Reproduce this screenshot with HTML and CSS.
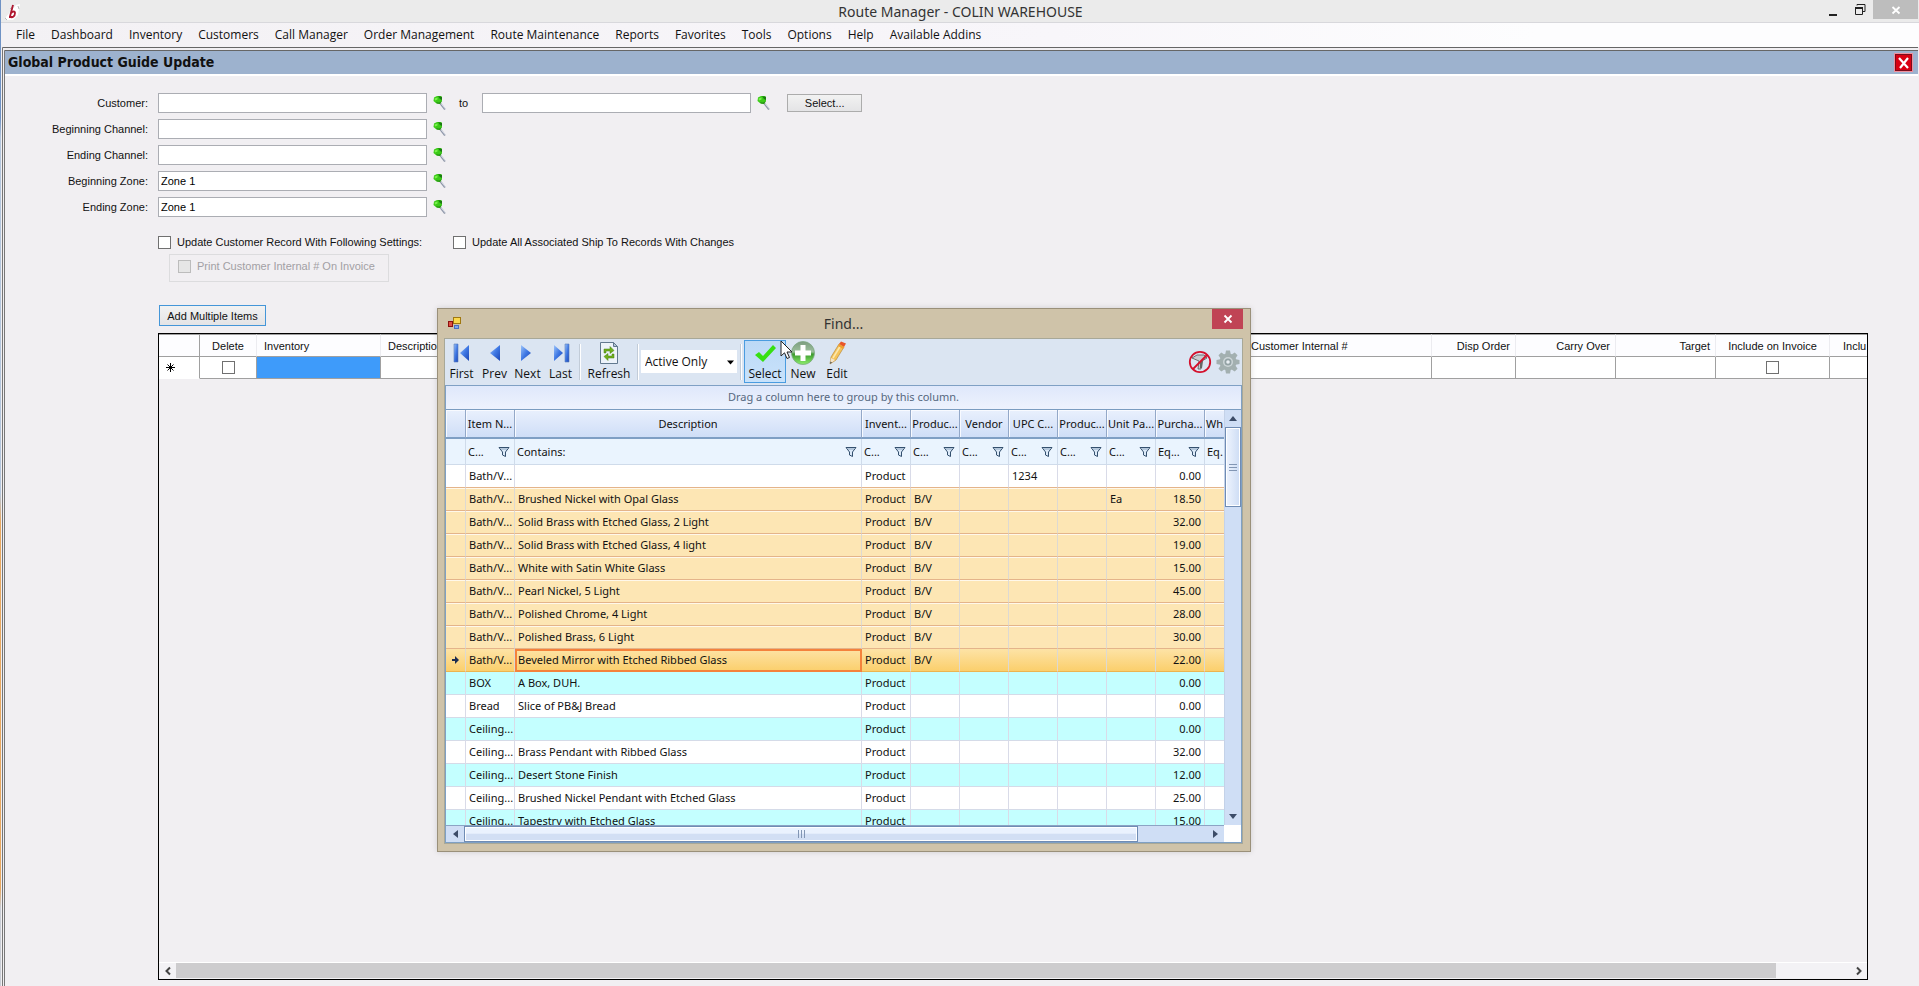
FILE: index.html
```html
<!DOCTYPE html>
<html lang="en">
<head>
<meta charset="utf-8">
<title>Route Manager - COLIN WAREHOUSE</title>
<link rel="stylesheet" href="styles.css">
</head>
<body>
<svg class="defs" aria-hidden="true">
  <defs>
    <linearGradient id="blue" x1="0" y1="0" x2="1" y2="1"><stop offset="0" stop-color="#9cc4fa"/><stop offset=".5" stop-color="#3f78e4"/><stop offset="1" stop-color="#1c46b4"/></linearGradient>
    <linearGradient id="green" x1="0" y1="0" x2="0" y2="1"><stop offset="0" stop-color="#7d9c80"/><stop offset=".45" stop-color="#9cc09c"/><stop offset=".55" stop-color="#3c9a2e"/><stop offset="1" stop-color="#8df06c"/></linearGradient>
    <symbol id="pin" viewBox="0 0 15 16">
      <path d="M7 8l5 6.500" stroke="#8f97a8" stroke-width="2"/><path d="M7.500 8l5 6" stroke="#e4e8f2" stroke-width=".8"/>
      <path d="M1 2.500L4 1l4 0 1 1v4L7 9 3.500 8.500 .5 6z" fill="#3ccb18"/><path d="M5 1l4 1v3L7 4z" fill="#1c7a12"/><path d="M3 7l3 .5L9 6 7 9 4 8.500z" fill="#2a9418"/><path d="M1.500 3.500l3-1v2l-2.500 1z" fill="#7cf050"/>
    </symbol>
    <symbol id="funnel" viewBox="0 0 12 12">
      <path d="M1 1.500h10L7.500 6v4.500l-3-1.500V6z" fill="#dbe9f8" stroke="#34506e" stroke-width="1"/><path d="M3 3h6" stroke="#8ba5c0"/>
    </symbol>
  </defs>
</svg>

<div class="app">
  <header class="titlebar">
    <svg class="logo" viewBox="0 0 16 16" width="16" height="16"><path d="M2 13L12 1l4-1-2 11-5 5H2z" fill="#fff"/><path d="M1 14l2 2M14 2l1 3M10 1l-4 4" stroke="#bbb" stroke-width="1"/><path d="M9 1L6 12.500c2 2 5 0 5-3.500 0-2-2-2-4 0M5 13h4" fill="none" stroke="#b01830" stroke-width="1.800"/></svg>
    <h1 class="app-title">Route Manager - COLIN WAREHOUSE</h1>
    <div class="win-buttons">
      <button class="wb" aria-label="Minimize"><svg width="12" height="14"><path d="M2 12h8" stroke="#222" stroke-width="2"/></svg></button>
      <button class="wb" aria-label="Restore"><svg width="12" height="14"><path d="M3 2.500V1.500h8v7H9M1.500 4.500h7v7h-7z" fill="none" stroke="#222"/><path d="M1 5h8" stroke="#222" stroke-width="2"/></svg></button>
      <button class="wb wb-close" aria-label="Close"><svg width="10" height="10"><path d="M1.500 2l7 6.500M8.500 2l-7 6.500" stroke="#fff" stroke-width="1.800"/></svg></button>
    </div>
  </header>
  <nav class="menu">
    <a href="#">File</a><a href="#">Dashboard</a><a href="#">Inventory</a><a href="#">Customers</a><a href="#">Call Manager</a><a href="#">Order Management</a><a href="#">Route Maintenance</a><a href="#">Reports</a><a href="#">Favorites</a><a href="#">Tools</a><a href="#">Options</a><a href="#">Help</a><a href="#">Available Addins</a>
  </nav>
  <main class="child">
    <div class="child-head">
      <h2>Global Product Guide Update</h2>
      <button class="child-close" aria-label="Close form"><svg width="12" height="14"><path d="M1 2l9 10M10 2L2 12" stroke="#fff" stroke-width="2.200"/></svg></button>
    </div>
    <div class="page">
      <form class="fields">
        <div class="field">
          <label for="cust">Customer:</label><input id="cust" type="text"><button type="button" class="pin" aria-label="Look up customer"><svg><use href="#pin"/></svg></button>
          <label class="to" for="cust2">to</label><input id="cust2" type="text"><button type="button" class="pin" aria-label="Look up last customer"><svg><use href="#pin"/></svg></button>
          <button type="button" class="btn btn-select">Select...</button>
        </div>
        <div class="field"><label for="bc">Beginning Channel:</label><input id="bc" type="text"><button type="button" class="pin" aria-label="Look up"><svg><use href="#pin"/></svg></button></div>
        <div class="field"><label for="ec">Ending Channel:</label><input id="ec" type="text"><button type="button" class="pin" aria-label="Look up"><svg><use href="#pin"/></svg></button></div>
        <div class="field"><label for="bz">Beginning Zone:</label><input id="bz" type="text" value="Zone 1"><button type="button" class="pin" aria-label="Look up"><svg><use href="#pin"/></svg></button></div>
        <div class="field"><label for="ez">Ending Zone:</label><input id="ez" type="text" value="Zone 1"><button type="button" class="pin" aria-label="Look up"><svg><use href="#pin"/></svg></button></div>
      </form>
      <div class="checks">
        <label class="check check-first"><input type="checkbox">Update Customer Record With Following Settings:</label>
        <label class="check"><input type="checkbox">Update All Associated Ship To Records With Changes</label>
      </div>
      <div class="sub"><label class="check"><input type="checkbox" disabled>Print Customer Internal # On Invoice</label></div>
      <button class="btn btn-add">Add Multiple Items</button>
      <div class="grid">
        <table class="items">
          <colgroup><col class="c-row"><col class="c-del"><col class="c-inv"><col class="c-desc"><col class="c-int"><col class="c-disp"><col class="c-carry"><col class="c-carry"><col class="c-incl"><col class="c-last"></colgroup>
          <thead><tr><th></th><th class="mid">Delete</th><th>Inventory</th><th>Description</th><th>Customer Internal #</th><th class="end">Disp Order</th><th class="end">Carry Over</th><th class="end">Target</th><th class="mid">Include on Invoice</th><th class="wide">Inclu</th></tr></thead>
          <tbody><tr><td class="star"><svg width="11" height="11"><path d="M5.500 1v9M1 5.500h9M2.500 2.500l6 6M8.500 2.500l-6 6" stroke="#000"/></svg></td><td class="mid"><input type="checkbox" aria-label="Delete"></td><td class="active"></td><td></td><td></td><td></td><td></td><td></td><td class="mid"><input type="checkbox" aria-label="Include on invoice"></td><td></td></tr></tbody>
        </table>
        <div class="bar">
          <button aria-label="Scroll left"><svg width="8" height="10"><path d="M6 1.500L2.500 5 6 8.500" fill="none" stroke="#444" stroke-width="2"/></svg></button>
          <div class="track"><div class="thumb"></div></div>
          <button aria-label="Scroll right"><svg width="8" height="10"><path d="M2 1.500L5.500 5 2 8.500" fill="none" stroke="#444" stroke-width="2"/></svg></button>
        </div>
      </div>
    </div>
  </main>
</div>

<section class="dialog" role="dialog" aria-label="Find">
  <div class="dlg-head">
    <svg class="dlg-icon" width="13" height="13"><rect x=".5" y="4.500" width="4" height="5" fill="#e05040" stroke="#8c1010"/><rect x="5.500" y=".5" width="7" height="6" fill="#fbd84c" stroke="#a07810"/><rect x="6.500" y="8.500" width="4" height="3" fill="#7fa8ec" stroke="#4a70c0"/></svg>
    <span class="dlg-title">Find...</span>
    <button class="dlg-close" aria-label="Close"><svg width="10" height="10"><path d="M1.500 1.500l7 7M8.500 1.500l-7 7" stroke="#fff" stroke-width="1.800"/></svg></button>
  </div>
  <div class="dlg-body">
    <div class="tools">
      <button class="tool t1"><svg width="20" height="20"><path d="M2 1h4v18H2z" fill="url(#blue)" stroke="#5c7cb8" stroke-width=".6"/><path d="M17 2v16L8 10z" fill="url(#blue)"/></svg>First</button>
      <button class="tool t1"><svg width="20" height="20"><path d="M15 2v16L5 10z" fill="url(#blue)"/></svg>Prev</button>
      <button class="tool t1"><svg width="20" height="20"><path d="M3 2v16l10-8z" fill="url(#blue)"/></svg>Next</button>
      <button class="tool t1"><svg width="20" height="20"><path d="M3 2v16l9-8z" fill="url(#blue)"/><path d="M14 1h4v18h-4z" fill="url(#blue)" stroke="#5c7cb8" stroke-width=".6"/></svg>Last</button>
      <i class="sep"></i>
      <button class="tool t2"><svg width="20" height="24"><path d="M1.500 1.500h13l4 4v17h-17z" fill="#edf3fa" stroke="#62798f"/><path d="M14.500 1.500v4h4z" fill="#b4c4d4" stroke="#62798f"/><path d="M5 12V8h6V5.500l4 4-4 3V10H7v2zM15 13v4H9v2.500l-4-4 4-3V15h4v-2z" fill="#6fb01c" stroke="#447c10" stroke-width=".5"/></svg>Refresh</button>
      <i class="sep"></i>
      <div class="combo"><select aria-label="Status filter"><option>Active Only</option></select><svg width="7" height="5"><path d="M0 .5h7L3.500 4.500z"/></svg></div>
      <i class="sep"></i>
      <button class="tool t3 on"><svg width="24" height="22"><path d="M2 12l4-3 4 4L20 2l3 3L10 19z" fill="#36e012"/></svg>Select</button>
      <button class="tool t4"><svg width="24" height="24"><circle cx="12" cy="12" r="11.500" fill="url(#green)" stroke="#7fa884" stroke-width=".8"/><path d="M9.500 4h5v5.500H20v5h-5.500V20h-5v-5.500H4v-5h5.500z" fill="#fff"/></svg>New</button>
      <button class="tool t4"><svg width="24" height="24"><path d="M5 23l1-7L14 3l5 3-8 13z" fill="#f5c45c" stroke="#b08030" stroke-width=".6"/><path d="M8 17l8-13" stroke="#fce8ae" stroke-width="1.500"/><path d="M14 3l2-2.500 5 2L19 6z" fill="#e8562a"/><path d="M13 5l1.300-2 5 3L18 8z" fill="#f0a030"/><path d="M6 17l4 2-5 4z" fill="#f2e4cc"/><path d="M5.500 20.500l1.500 1L5 23z" fill="#444"/></svg>Edit</button>
      <span class="push"></span>
      <button class="ico" aria-label="Clear filter"><svg width="24" height="24"><path d="M4 8l5-3h7l3 3-5 3-1 8h-3l1-8z" fill="#c9ccd0" stroke="#555" stroke-width=".8"/><path d="M12 11l0 7h2l1-7z" fill="#666"/><circle cx="12" cy="12" r="10.200" fill="none" stroke="#d4102c" stroke-width="1.800"/><path d="M19 5L5 19" stroke="#d4102c" stroke-width="1.800"/></svg></button>
      <button class="ico" aria-label="Settings"><svg width="26" height="24"><g transform="translate(13 12)" fill="#a3b0b0"><circle r="8.500"/><path id="t" d="M-2-11.500h4l1 5h-6zM-2 11.500h4l1-5h-6zM-11.500-2v4l5 1v-6zM11.500-2v4l-5 1v-6z"/><use href="#t" transform="rotate(45)"/><circle r="5" fill="#cdd6d8"/><circle r="3.500" fill="#93a2a4"/><circle r="1.800" fill="#e8eef2"/></g></svg></button>
    </div>
    <div class="find">
      <div class="group">Drag a column here to group by this column.</div>
      <div class="pane">
        <div class="view">
          <table class="data">
            <colgroup><col class="d0"><col class="d"><col class="dd"><col class="d"><col class="d"><col class="d"><col class="d"><col class="d"><col class="d"><col class="d"><col class="dl"></colgroup>
            <thead>
              <tr><th></th><th>Item N...</th><th>Description</th><th>Invent...</th><th>Produc...</th><th>Vendor</th><th>UPC C...</th><th>Produc...</th><th>Unit Pa...</th><th>Purcha...</th><th class="cut">Wh</th></tr>
              <tr class="filters"><td></td><td><div><span>C...</span><svg><use href="#funnel"/></svg></div></td><td><div><span>Contains:</span><svg><use href="#funnel"/></svg></div></td><td><div><span>C...</span><svg><use href="#funnel"/></svg></div></td><td><div><span>C...</span><svg><use href="#funnel"/></svg></div></td><td><div><span>C...</span><svg><use href="#funnel"/></svg></div></td><td><div><span>C...</span><svg><use href="#funnel"/></svg></div></td><td><div><span>C...</span><svg><use href="#funnel"/></svg></div></td><td><div><span>C...</span><svg><use href="#funnel"/></svg></div></td><td><div><span>Eq...</span><svg><use href="#funnel"/></svg></div></td><td class="cut">Eq.</td></tr>
            </thead>
            <tbody>
              <tr class="presel"><td></td><td>Bath/V...</td><td></td><td>Product</td><td></td><td></td><td>1234</td><td></td><td></td><td>0.00</td><td></td></tr>
              <tr class="sel"><td></td><td>Bath/V...</td><td>Brushed Nickel with Opal Glass</td><td>Product</td><td>B/V</td><td></td><td></td><td></td><td>Ea</td><td>18.50</td><td></td></tr>
              <tr class="sel"><td></td><td>Bath/V...</td><td>Solid Brass with Etched Glass, 2 Light</td><td>Product</td><td>B/V</td><td></td><td></td><td></td><td></td><td>32.00</td><td></td></tr>
              <tr class="sel"><td></td><td>Bath/V...</td><td>Solid Brass with Etched Glass, 4 light</td><td>Product</td><td>B/V</td><td></td><td></td><td></td><td></td><td>19.00</td><td></td></tr>
              <tr class="sel"><td></td><td>Bath/V...</td><td>White with Satin White Glass</td><td>Product</td><td>B/V</td><td></td><td></td><td></td><td></td><td>15.00</td><td></td></tr>
              <tr class="sel"><td></td><td>Bath/V...</td><td>Pearl Nickel, 5 Light</td><td>Product</td><td>B/V</td><td></td><td></td><td></td><td></td><td>45.00</td><td></td></tr>
              <tr class="sel"><td></td><td>Bath/V...</td><td>Polished Chrome, 4 Light</td><td>Product</td><td>B/V</td><td></td><td></td><td></td><td></td><td>28.00</td><td></td></tr>
              <tr class="sel"><td></td><td>Bath/V...</td><td>Polished Brass, 6 Light</td><td>Product</td><td>B/V</td><td></td><td></td><td></td><td></td><td>30.00</td><td></td></tr>
              <tr class="sel cur"><td><svg width="7" height="8"><path d="M0 3h3V0l4 4-4 4V5H0z" fill="#1c2c50"/></svg></td><td>Bath/V...</td><td>Beveled Mirror with Etched Ribbed Glass</td><td>Product</td><td>B/V</td><td></td><td></td><td></td><td></td><td>22.00</td><td></td></tr>
              <tr class="alt"><td></td><td>BOX</td><td>A Box, DUH.</td><td>Product</td><td></td><td></td><td></td><td></td><td></td><td>0.00</td><td></td></tr>
              <tr><td></td><td>Bread</td><td>Slice of PB&amp;J Bread</td><td>Product</td><td></td><td></td><td></td><td></td><td></td><td>0.00</td><td></td></tr>
              <tr class="alt"><td></td><td>Ceiling...</td><td></td><td>Product</td><td></td><td></td><td></td><td></td><td></td><td>0.00</td><td></td></tr>
              <tr><td></td><td>Ceiling...</td><td>Brass Pendant with Ribbed Glass</td><td>Product</td><td></td><td></td><td></td><td></td><td></td><td>32.00</td><td></td></tr>
              <tr class="alt"><td></td><td>Ceiling...</td><td>Desert Stone Finish</td><td>Product</td><td></td><td></td><td></td><td></td><td></td><td>12.00</td><td></td></tr>
              <tr><td></td><td>Ceiling...</td><td>Brushed Nickel Pendant with Etched Glass</td><td>Product</td><td></td><td></td><td></td><td></td><td></td><td>25.00</td><td></td></tr>
              <tr class="alt"><td></td><td>Ceiling...</td><td>Tapestry with Etched Glass</td><td>Product</td><td></td><td></td><td></td><td></td><td></td><td>15.00</td><td></td></tr>
            </tbody>
          </table>
        </div>
        <div class="vbar">
          <button aria-label="Scroll up"><svg width="8" height="5"><path d="M0 5h8L4 0z" fill="#3c4c68"/></svg></button>
          <div class="vthumb"><svg width="8" height="7"><path d="M0 .5h8M0 3.500h8M0 6.500h8" stroke="#8296b4"/></svg></div>
          <span class="push"></span>
          <button aria-label="Scroll down"><svg width="8" height="5"><path d="M0 0h8L4 5z" fill="#3c4c68"/></svg></button>
        </div>
        <div class="hbar">
          <button aria-label="Scroll left"><svg width="5" height="8"><path d="M5 0v8L0 4z" fill="#3c4c68"/></svg></button>
          <div class="hthumb"><svg width="7" height="8"><path d="M.5 0v8M3.500 0v8M6.500 0v8" stroke="#8296b4"/></svg></div>
          <span class="push"></span>
          <button aria-label="Scroll right"><svg width="5" height="8"><path d="M0 0v8l5-4z" fill="#3c4c68"/></svg></button>
        </div>
        <div class="corner"></div>
      </div>
    </div>
  </div>
</section>
<svg class="cursor" width="13" height="20" viewBox="0 0 13 20"><path d="M1 1v15l3.500-3.200L7 18.500l2.500-1L7 12h5z" fill="#fff" stroke="#222"/></svg>
</body>
</html>
```
FILE: styles.css
```css
* { box-sizing: border-box; }
body { margin: 0; background: #f1eff2; color: #111; font: 11px/16px "Liberation Sans", Arial, sans-serif; overflow: hidden; }
button { font: inherit; color: inherit; padding: 0; border: 0; background: none; }
a { color: inherit; text-decoration: none; }
svg { display: block; flex: none; }
table { border-spacing: 0; table-layout: fixed; }
.defs { position: absolute; width: 0; height: 0; }
.push { flex: 1; }

.app { min-height: 100vh; display: flex; flex-direction: column; border-left: 1px solid #6f92c4; border-image: linear-gradient(#6f92c4 0 12%, #b4c6dc 14% 50%, #e8a860 53% 90%, #c8ccd4 92%) 1; }
.titlebar { height: 23px; display: flex; align-items: flex-start; background: #ebebeb; border-bottom: 1px solid #d8d8dc; padding-right: 1px; }
.logo { margin: 4px 0 0 3px; }
.app-title { flex: 1; margin: 0 0 0 82px; text-align: center; font: 14px/23px "Noto Sans", "Open Sans", sans-serif; color: #333; }
.win-buttons { display: flex; }
.wb { width: 27px; height: 19px; display: flex; align-items: center; justify-content: center; }
.wb-close { width: 45px; background: #bdbdbd; }
.menu { height: 24px; display: flex; gap: 16px; padding-left: 15px; background: linear-gradient(90deg, #f3f1f4, #f8f6fa 55%, #fdfdfe 80%); font: 12px/24px "Open Sans", "Noto Sans", sans-serif; }

.child { flex: 1; display: flex; flex-direction: column; margin: 0 1px 0 1px; border: solid #777; border-width: 1px 0 0 3px; border-style: double; border-top: 4px double #666; }
.child-head { height: 25px; display: flex; align-items: center; justify-content: space-between; padding: 0 6px 0 3px; background: #9db2ce; border-bottom: 2px solid #fff; }
.child-head h2 { margin: 0; font: bold 14px/23px "DejaVu Sans Condensed", "Open Sans", sans-serif; }
.child-close { width: 17px; height: 17px; display: flex; align-items: center; justify-content: center; background: #d80012; border: 1px solid #7c0c1c; outline: 1px solid #f0909c; }
.page { flex: 1; display: flex; flex-direction: column; align-items: flex-start; padding: 17px 50px 6px 153px; }

.fields { display: flex; flex-direction: column; gap: 6px; margin-left: -153px; }
.field { display: flex; align-items: center; height: 20px; }
.field label { width: 143px; text-align: right; margin-right: 10px; }
.field .to { width: auto; margin: 0 14px 0 11px; }
.field input { width: 269px; height: 20px; padding: 0 2px; border: 1px solid #abadb3; background: #fff; font: inherit; }
.pin { width: 15px; height: 16px; margin-left: 6px; }
.pin svg { width: 15px; height: 16px; }
.btn { border: 1px solid #acacac; background: linear-gradient(#f2f2f2, #e4e4e6); text-align: center; }
.btn-select { width: 75px; height: 18px; margin-left: 15px; }
.btn-add { width: 107px; height: 21px; margin: 23px 0 7px 1px; border-color: #4496d8; }
.checks { display: flex; margin-top: 15px; height: 20px; align-items: center; }
.check { display: flex; align-items: center; gap: 6px; }
.check-first { width: 295px; }
input[type="checkbox"] { appearance: none; width: 13px; height: 13px; margin: 0; border: 1px solid #707070; background: #fff; flex: none; }
input[type="checkbox"]:disabled { border-color: #bcbcbc; background: #e6e6e6; }
.sub { width: 220px; height: 28px; margin: 2px 0 0 11px; padding: 3px 8px; border: 1px solid #dcdcde; color: #a2a0a4; }

.grid { flex: 1; align-self: stretch; display: flex; flex-direction: column; justify-content: space-between; border: 1px solid #000; overflow: hidden; }
.items { width: 100%; }
.c-row { width: 41px; } .c-del { width: 57px; } .c-inv { width: 124px; } .c-int { width: 188px; }
.c-disp { width: 84px; } .c-carry { width: 100px; } .c-incl { width: 114px; } .c-last { width: 37px; }
.items th { height: 23px; padding: 0 5px 0 7px; font-weight: normal; text-align: left; white-space: nowrap; background: #fdfdff; border-top: 1px solid #a0a0a0; border-right: 1px solid #ececf0; border-bottom: 1px solid #a0a0a0; }
.items th:first-child { border-right-color: #a0a0a0; }
.items .mid { text-align: center; padding: 0; } .items .end { text-align: right; } .items .wide { padding: 0 0 0 13px; }
.items td { height: 22px; padding: 0; background: #fff; border: solid #a0a0a0; border-width: 0 1px 1px 0; }
.items .star { padding-left: 6px; border-bottom-color: #fff; }
.items .active { background: #3e9bfa; }
.items tr > :last-child { border-right: 0; }
.items input { display: block; margin: 0 auto; }
.bar { height: 17px; display: flex; border-top: 1px solid #fff; background: #f3f2f5; }
.bar button { width: 17px; display: flex; align-items: center; justify-content: center; }
.track { flex: 1; }
.thumb { width: calc(100% - 74px); height: 15px; background: #cdccce; }

.dialog { position: absolute; left: 437px; top: 308px; width: 814px; border: 1px solid #9a907a; background: #cfc3a9; padding: 0 7px 7px 6px; font-family: "Noto Sans", sans-serif; box-shadow: 0 0 6px #0002; }
.dlg-head { height: 29px; display: flex; align-items: flex-start; }
.dlg-icon { margin: 8px 0 0 4px; }
.dlg-title { flex: 1; padding-left: 14px; text-align: center; font: 14px/29px "Noto Sans", sans-serif; color: #333; }
.dlg-close { width: 31px; height: 20px; background: #c04455; display: flex; align-items: center; justify-content: center; }
.dlg-body { border: 1px solid #a8a898; background: #dbe5f2; }
.tools { height: 46px; display: flex; align-items: center; padding-bottom: 1px; font: 12px/16px "Open Sans", sans-serif; }
.tool { height: 43px; display: flex; flex-direction: column; align-items: center; justify-content: flex-end; padding-bottom: 1px; }
.tool svg { margin: auto 0; }
.t1 { width: 33px; } .t2 { width: 52px; } .t3 { width: 42px; } .t4 { width: 34px; }
.on { border: 1px solid #4a9ce0; background: linear-gradient(#bcd9f6, #c8e2fb); padding-bottom: 0; }
.sep { width: 2px; height: 36px; margin: 0 2px; background: #c2ccd8; border-right: 1px solid #fff; }
.combo { position: relative; width: 96px; height: 23px; margin-right: 1px; }
.combo select { appearance: none; width: 100%; height: 100%; padding: 0 4px; border: 0; background: #fff; font: inherit; color: #111; }
.combo svg { position: absolute; right: 3px; top: 10px; }
.ico { width: 28px; display: flex; justify-content: center; }

.find { border: 1px solid #7fa0c4; }
.group { height: 24px; line-height: 22px; text-align: center; color: #56687f; background: linear-gradient(#dfe8fb, #edf2fd); border-bottom: 1px solid #7a9cc0; }
.pane { display: grid; grid-template-columns: 1fr 17px; grid-template-rows: 415px 17px; background: #fff; }
.view { overflow: hidden; }
.data { width: 100%; }
.d0 { width: 20px; } .d { width: 49px; } .dl { width: 19px; }
.data th { height: 29px; padding: 0; font-weight: normal; background: linear-gradient(#e9f0fd, #cfdef7); border-right: 1px solid #93a8c8; border-bottom: 2px solid #7f9fc4; box-shadow: inset 1px 1px #f8faff; }
.data th, .data td { overflow: hidden; white-space: nowrap; }
.data td { height: 23px; padding: 0 0 0 3px; border-right: 1px solid #d9dbe8; border-bottom: 1px solid #d5dbe8; }
.data .filters td { height: 26px; padding: 0 4px 0 2px; background: #eaf4fe; border-color: #cfdbea; }
.data tr > :last-child { border-right: 0; }
.data .filters .cut { padding: 0 0 0 2px; }
.filters div { display: flex; align-items: center; justify-content: space-between; }
.filters svg { width: 12px; height: 12px; }
.data tbody td:nth-child(10) { text-align: right; padding-right: 3px; }
.data tbody td:first-child { padding-left: 6px; }
.data .alt td { background: #c4ffff; }
.data .presel td { border-bottom-color: #e4b48a; }
.data .sel td { background: #fde6b4; border-bottom-color: #e4b48a; border-right-color: #ddd9d2; box-shadow: inset 0 1px #fff8ea; }
.data .cur td { background: linear-gradient(#fde3a6, #fbcf6c); border-bottom-color: #ecb450; box-shadow: none; }
.data .cur td:nth-child(3) { outline: 2px solid #f4823c; outline-offset: -2px; }
.vbar, .hbar { display: flex; background: #cfdef5; }
.vbar { flex-direction: column; border-left: 1px solid #c4d2e8; }
.vbar button { height: 17px; display: flex; align-items: center; justify-content: center; }
.vthumb, .hthumb { display: flex; align-items: center; justify-content: center; border: 1px solid #6f8cb4; box-shadow: inset 0 0 0 1px #fff; }
.vthumb { height: 80px; background: linear-gradient(90deg, #eef4fe, #cddcf4); }
.hbar { border-top: 1px solid #8ca4c4; }
.hbar button { width: 18px; display: flex; align-items: center; justify-content: center; }
.hthumb { width: 674px; background: linear-gradient(#eaf2fe 45%, #d2dff4 50%); }
.cursor { position: absolute; left: 780px; top: 340px; }
```
